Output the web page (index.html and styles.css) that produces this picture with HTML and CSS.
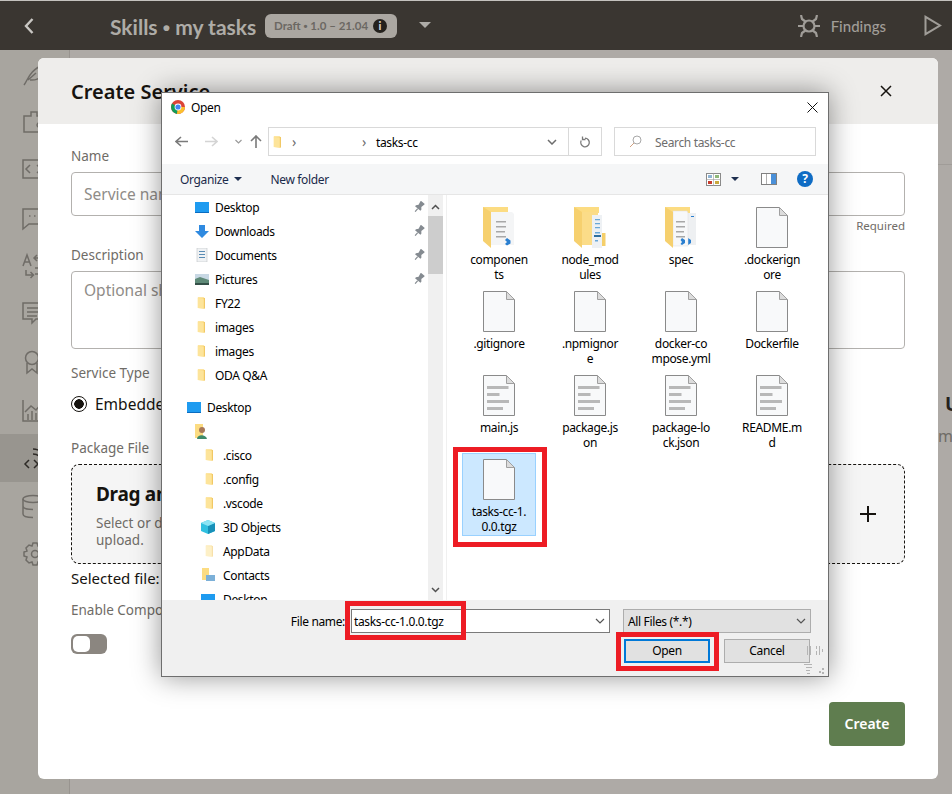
FILE: index.html
```html
<!DOCTYPE html>
<html lang="en">
<head>
  <meta charset="UTF-8">
  <title>Create Service</title>
  <link rel="stylesheet" href="styles.css">
</head>
<body>

  <svg class="defs" width="0" height="0">
    <symbol id="tree-folder" viewBox="0 0 12 16">
      <path d="M1 1h7l1 1v13l-8-1z" fill="#fcdc82"/>
      <path d="M8 2h1.500v12.500H8z" fill="#f0c45c"/>
      <path d="M1 2l7 1v11.500l-7-.5z" fill="#fde49a"/>
    </symbol>
    <symbol id="pin" viewBox="0 0 12 12">
      <g transform="rotate(40 6 6)" fill="#858b91">
        <path d="M3.500 0h5v1l-.7 3.500L9.500 6.500V8h-7V6.500l1.700-2L3.500 1z"/>
        <path d="M5.400 8h1.200v4H5.400z"/>
      </g>
    </symbol>
    <symbol id="blank-doc" viewBox="0 0 32 41">
      <path d="M.5.500h23l8 8v32H.5z" fill="#f8f9fa" stroke="#8a8a8a"/>
      <path d="M23.500.500v8h8z" fill="#dcdcdc" stroke="#a0a0a0"/>
    </symbol>
    <symbol id="text-doc" viewBox="0 0 32 41">
      <path d="M.5.500h23l8 8v32H.5z" fill="#f8f9fa" stroke="#8a8a8a"/>
      <path d="M23.500.500v8h8z" fill="#dcdcdc" stroke="#a0a0a0"/>
      <path d="M4 11h21.500v3H4zM4 18h12.500v3H4zM4 25h22v3H4zM4 32h16v3H4z" fill="#b8b8b8"/>
    </symbol>
    <symbol id="folder-doc" viewBox="0 0 32 41">
      <path d="M0 0h25v6H0z" fill="#fcdc82"/>
      <path d="M8 5h21l2 2v31H8z" fill="#f4f5f6"/>
      <path d="M13 14h10v1.400H13zM13 19h10v1.400H13zM13 24h9v1.400h-9zM13 29h10v1.400H13z" fill="#a8a8a8"/>
      <path d="M24 31l3.500 2.500v3L24 38.500l-2-1.500 2-2-2-2z" fill="#2a7fd0"/>
      <path d="M0 0l8 5v36l-8-7z" fill="#f6d06e"/>
    </symbol>
    <symbol id="folder-node" viewBox="0 0 32 41">
      <path d="M0 0h25v6H0z" fill="#fcdc82"/>
      <path d="M8 5h16v33H8z" fill="#fbdc88"/>
      <path d="M18 8h10v33H18z" fill="#eef1f4"/>
      <path d="M28 26h3.500v13H28z" fill="#f5cf6a"/>
      <path d="M21 12h5v1.200h-5zM21 16h5v1.200h-5zM21 20h5v1.200h-5zM21 25h5v1.400h-5zM21 33h3v1.400h-3z" fill="#6aa8d8"/>
      <path d="M20 28h7v2h-7z" fill="#2f6f9f"/>
      <path d="M0 0l8 5v36l-8-7z" fill="#f6d06e"/>
    </symbol>
    <symbol id="folder-spec" viewBox="0 0 32 41">
      <path d="M0 0h25v6H0z" fill="#fcdc82"/>
      <path d="M20 6h11v32H20z" fill="#eef0f2"/>
      <path d="M23 31l3 2v3l-3 2-1.500-1 1.500-2-1.500-2zM26 9h3v1h-3z" fill="#2a7fd0"/>
      <path d="M8 4h14l1 2v33H8z" fill="#f7f8f9" stroke="#dedede" stroke-width=".5"/>
      <path d="M11 14h9v1.400h-9zM11 19h9v1.400h-9zM11 24h8v1.400h-8zM11 29h9v1.400h-9z" fill="#a8a8a8"/>
      <path d="M17 31l3 2v3l-3 2-1.500-1 1.500-2-1.500-2z" fill="#2a7fd0"/>
      <path d="M0 0l8 5v36l-8-7z" fill="#f6d06e"/>
    </symbol>
  </svg>

  <header class="topbar">
    <svg class="back" width="12" height="18" viewBox="0 0 12 18"><path d="M9.500 2L3 9l6.500 7" fill="none" stroke="#c9c7c3" stroke-width="2.400"/></svg>
    <div class="skill-title">Skills <span class="dot">•</span> my tasks</div>
    <div class="badge"><span>Draft <span class="dot">•</span> 1.0 – 21.04</span> <span class="info">i</span></div>
    <span class="caret"></span>
    <div class="findings">
      <svg width="22" height="22" viewBox="0 0 22 22" fill="none" stroke="#a09d98" stroke-width="2.200">
        <circle cx="11" cy="11" r="5.500"/>
        <path d="M3 0l1 4 4 3M19 0l-1 4-4 3M0 11h5M22 11h-5M3 22l1-4 4-3M19 22l-1-4-4-3"/>
      </svg>
      <span>Findings</span>
    </div>
    <svg class="play" width="18" height="21" viewBox="0 0 18 21"><path d="M1.500 1.800v17.400L16 10.500z" fill="none" stroke="#a09d98" stroke-width="2"/></svg>
  </header>

  <div class="page">
    <nav class="sidebar">
      <div class="side-item"><svg viewBox="0 0 24 24"><path d="M1 23C5 18 6 8 22 2c0 10-5 17-15 16M5 18l8-7"/></svg></div>
      <div class="side-item"><svg viewBox="0 0 24 24"><path d="M1 6h7V2h6v4h8v16H1zM16 13a2 2 0 1 0 .1 0"/></svg></div>
      <div class="side-item"><svg viewBox="0 0 24 24"><path d="M0 2h24v18H0zM7 7l-4 4 4 4M14 7l4 4-4 4"/></svg></div>
      <div class="side-item"><svg viewBox="0 0 24 24"><path d="M0 3h24v15H6l-6 5zM6 10h1.500M11 10h1.500M16 10h1.500"/></svg></div>
      <div class="side-item"><svg viewBox="0 0 24 24"><path d="M0 12L4 1l4 11M1.500 8h5M14 1l-3 3 3 3M11 4h9M3 16v5h7M7.500 18l3 3-3 3M12 14h8M12 20h8"/></svg></div>
      <div class="side-item"><svg viewBox="0 0 24 24"><path d="M0 1h22v16h-9l-4 4v-4H0zM4 6h14M4 10h14M4 14h10"/></svg></div>
      <div class="side-item"><svg viewBox="0 0 24 24"><circle cx="9" cy="8" r="6.500"/><path d="M4 13v10l5-4 5 4V13"/></svg></div>
      <div class="side-item"><svg viewBox="0 0 24 24"><path d="M0 2v21h22M2 14l6-6 5 4 7-8M5 22v-6M9 22v-9M13 22v-7M17 22v-9"/></svg></div>
      <div class="side-item active"><svg viewBox="0 0 24 24"><path d="M6 14l-4 4 4 4M11 14l4 4-4 4M10 8c5 0 8 3 9 8M10 3c7 0 12 5 13 12"/></svg></div>
      <div class="side-item"><svg viewBox="0 0 24 24"><ellipse cx="10" cy="5" rx="10" ry="3.500"/><path d="M0 5v15c0 2 4 3.500 10 3.500M20 5v15M0 12c0 2 4 3.500 10 3.500"/></svg></div>
      <div class="side-item"><svg viewBox="0 0 24 24"><circle cx="12" cy="12" r="3.500"/><path d="M10 1h4l1 3 3-1 3 3-1 3 3 1v4l-3 1 1 3-3 3-3-1-1 3h-4l-1-3-3 1-3-3 1-3-3-1v-4l3-1-1-3 3-3 3 1z"/></svg></div>
    </nav>
    <div class="behind">
      <div class="behind-top"></div>
      <div class="behind-title">U</div>
      <div class="behind-sub">m</div>
    </div>
  </div>

  <section class="modal">
    <div class="modal-head">
      <h2>Create Service</h2>
      <svg width="12" height="12" viewBox="0 0 12 12"><path d="M1 1l10 10M11 1L1 11" stroke="#16130f" stroke-width="1.500"/></svg>
    </div>
    <div class="modal-body">
      <div class="label">Name</div>
      <div class="input"><span class="placeholder">Service name</span></div>
      <div class="required">Required</div>
      <div class="label">Description</div>
      <div class="input textarea"><span class="placeholder">Optional short description</span></div>
      <div class="label type-label">Service Type</div>
      <div class="radio-row"><span class="radio"></span>Embedded Container</div>
      <div class="label package-label">Package File</div>
      <div class="dropzone">
        <div class="drop-text">
          <div class="drop-title">Drag and Drop</div>
          <div class="drop-sub">Select or drop a file here<br>upload.</div>
        </div>
        <span class="plus"></span>
      </div>
      <div class="selected">Selected file:</div>
      <div class="label enable-label">Enable Component Logging</div>
      <div class="toggle"><span></span></div>
      <div class="modal-foot"><button class="create">Create</button></div>
    </div>
  </section>

  <section class="dialog">
    <div class="dlg-title">
      <svg width="14" height="14" viewBox="0 0 14 14">
        <circle cx="7" cy="7" r="7" fill="#db4437"/>
        <path d="M7 7L1 3.600A7 7 0 0 0 6 13.900z" fill="#0f9d58"/>
        <path d="M7 7h7a7 7 0 0 1-8 6.900z" fill="#fbc02d"/>
        <circle cx="7" cy="7" r="3.400" fill="#fff"/>
        <circle cx="7" cy="7" r="2.600" fill="#4285f4"/>
      </svg>
      <span class="dlg-name">Open</span>
      <svg class="dlg-close" width="11" height="11" viewBox="0 0 11 11"><path d="M.5.500l10 10M10.500.500l-10 10" stroke="#111" stroke-width="1"/></svg>
    </div>

    <div class="nav-row">
      <div class="nav-arrows">
        <svg width="13" height="11" viewBox="0 0 13 11"><path d="M6 1L1 5.500 6 10M1 5.500h12" fill="none" stroke="#7a7a7a" stroke-width="1.600"/></svg>
        <svg class="fwd" width="13" height="11" viewBox="0 0 13 11"><path d="M7 1l5 4.500L7 10M12 5.500H0" fill="none" stroke="#d4d4d4" stroke-width="1.600"/></svg>
        <svg class="down" width="7" height="5" viewBox="0 0 7 5"><path d="M.5 1l3 3 3-3" fill="none" stroke="#9a9a9a" stroke-width="1.200"/></svg>
        <svg class="up" width="12" height="13" viewBox="0 0 12 13"><path d="M1 6l5-5 5 5M6 1v12" fill="none" stroke="#7a7a7a" stroke-width="1.600"/></svg>
      </div>
      <div class="address">
        <svg class="addr-folder" width="10" height="14"><use href="#tree-folder"/></svg>
        <span class="crumb">›</span>
        <span class="crumb second">›</span>
        <span class="addr-text">tasks-cc</span>
        <svg class="addr-drop" width="10" height="6" viewBox="0 0 10 6"><path d="M1 1l4 4 4-4" fill="none" stroke="#6d6d6d" stroke-width="1.500"/></svg>
        <div class="refresh">
          <svg width="12" height="12" viewBox="0 0 12 12"><path d="M6 2.200a4.300 4.300 0 1 1-3.800 2.300M3.500.500v3h3" fill="none" stroke="#7a7a7a" stroke-width="1.300"/></svg>
        </div>
      </div>
      <div class="search">
        <svg width="13" height="13" viewBox="0 0 13 13"><circle cx="8" cy="5" r="4" fill="none" stroke="#a8a8a8"/><path d="M5 8l-4 4" stroke="#d0a080" stroke-width="1"/></svg>
        <span>Search tasks-cc</span>
      </div>
    </div>

    <div class="toolbar">
      <span class="tool-btn">Organize<span class="tool-caret"></span></span>
      <span class="tool-btn new-folder">New folder</span>
      <div class="tool-right">
        <svg width="15" height="13" viewBox="0 0 15 13">
          <rect x=".5" y=".5" width="14" height="12" fill="#fff" stroke="#8a8a8a"/>
          <path d="M2 2h4v3H2z" fill="#8fb4d4"/><path d="M9 2h4v3H9z" fill="#8fb87a"/>
          <path d="M2 8h4v3H2z" fill="#c83c2c"/><path d="M9 8h4v3H9z" fill="#c8a83c"/>
          <path d="M0 6.500h15M7.500 0v13" stroke="#9a9a9a" stroke-width=".6"/>
        </svg>
        <span class="tool-caret"></span>
        <svg class="pane-icon" width="16" height="12" viewBox="0 0 16 12">
          <rect x=".5" y=".5" width="15" height="11" fill="#fff" stroke="#808080"/>
          <path d="M10 1h5v10h-5z" fill="#4a90d9"/><path d="M5 1h1v10H5z" fill="#b0b0b0"/>
        </svg>
        <span class="help">?</span>
      </div>
    </div>

    <div class="dlg-main">
      <div class="tree">
        <div class="tree-row lvl-1"><svg width="14" height="11" viewBox="0 0 14 11"><rect width="14" height="11" fill="#1e9bf0"/><path d="M0 10h14v1H0z" fill="#0a6cc0"/></svg>Desktop<svg class="pin" width="12" height="12"><use href="#pin"/></svg></div>
        <div class="tree-row lvl-1"><svg width="14" height="13" viewBox="0 0 14 13"><path d="M4 0h6v6h4l-7 7-7-7h4z" fill="#2f8ae0"/></svg>Downloads<svg class="pin" width="12" height="12"><use href="#pin"/></svg></div>
        <div class="tree-row lvl-1"><svg width="14" height="14" viewBox="0 0 14 14"><path d="M2 0h10v14H2z" fill="#f0f2f4" stroke="#c0c4c8" stroke-width=".6"/><path d="M4 3h6v1H4zM4 6h6v1H4zM4 9h6v1H4z" fill="#5a8cb4"/></svg>Documents<svg class="pin" width="12" height="12"><use href="#pin"/></svg></div>
        <div class="tree-row lvl-1"><svg width="14" height="11" viewBox="0 0 14 11"><rect width="14" height="11" fill="#c8d8e4"/><path d="M0 5l5-2 9 3v5H0z" fill="#5f8a78"/><path d="M0 9h14v2H0z" fill="#345048"/></svg>Pictures<svg class="pin" width="12" height="12"><use href="#pin"/></svg></div>
        <div class="tree-row lvl-1"><svg class="folder" width="10" height="14"><use href="#tree-folder"/></svg>FY22</div>
        <div class="tree-row lvl-1"><svg class="folder" width="10" height="14"><use href="#tree-folder"/></svg>images</div>
        <div class="tree-row lvl-1"><svg class="folder" width="10" height="14"><use href="#tree-folder"/></svg>images</div>
        <div class="tree-row lvl-1"><svg class="folder" width="10" height="14"><use href="#tree-folder"/></svg>ODA Q&amp;A</div>
        <div class="tree-row lvl-0 tree-gap"><svg width="14" height="11" viewBox="0 0 14 11"><rect width="14" height="11" fill="#1e9bf0"/><path d="M0 10h14v1H0z" fill="#0a6cc0"/></svg>Desktop</div>
        <div class="tree-row lvl-user"><svg width="14" height="15" viewBox="0 0 14 15"><path d="M0 0h8v14H0z" fill="#fcdc82"/><circle cx="7" cy="6" r="3" fill="#a87858"/><path d="M2 15c0-5 9-5 10 0z" fill="#3f8a6a"/></svg></div>
        <div class="tree-row lvl-2"><svg class="folder" width="10" height="14"><use href="#tree-folder"/></svg>.cisco</div>
        <div class="tree-row lvl-2"><svg class="folder" width="10" height="14"><use href="#tree-folder"/></svg>.config</div>
        <div class="tree-row lvl-2"><svg class="folder" width="10" height="14"><use href="#tree-folder"/></svg>.vscode</div>
        <div class="tree-row lvl-2 wide-icon"><svg width="14" height="14" viewBox="0 0 14 14"><path d="M7 0l7 3v8l-7 3-7-3V3z" fill="#30c0e0"/><path d="M7 6l7-3v8l-7 3z" fill="#1890b8"/><path d="M7 6L0 3l7-3 7 3z" fill="#8ce4f4"/></svg>3D Objects</div>
        <div class="tree-row lvl-2"><svg class="folder faded" width="10" height="14"><use href="#tree-folder"/></svg>AppData</div>
        <div class="tree-row lvl-2 wide-icon"><svg width="14" height="14" viewBox="0 0 14 14"><path d="M1 0h7v12H1z" fill="#fcdc82"/><rect x="5" y="7" width="9" height="6" fill="#7cb0d8"/></svg>Contacts</div>
        <div class="tree-row lvl-2 wide-icon"><svg width="14" height="11" viewBox="0 0 14 11"><rect width="14" height="11" fill="#1e9bf0"/></svg>Desktop</div>
      </div>
      <div class="scrollbar">
        <svg width="9" height="6" viewBox="0 0 9 6"><path d="M1 5l3.500-3.500L8 5" fill="none" stroke="#505050" stroke-width="1.500"/></svg>
        <div class="thumb"></div>
        <svg class="scroll-down" width="9" height="6" viewBox="0 0 9 6"><path d="M1 1l3.500 3.500L8 1" fill="none" stroke="#505050" stroke-width="1.500"/></svg>
      </div>
      <div class="files">
        <div class="file"><svg width="32" height="41"><use href="#folder-doc"/></svg><div>componen<br>ts</div></div>
        <div class="file"><svg width="32" height="41"><use href="#folder-node"/></svg><div>node_mod<br>ules</div></div>
        <div class="file"><svg width="32" height="41"><use href="#folder-spec"/></svg><div>spec</div></div>
        <div class="file"><svg width="32" height="41"><use href="#blank-doc"/></svg><div>.dockerign<br>ore</div></div>
        <div class="file"><svg width="32" height="41"><use href="#blank-doc"/></svg><div>.gitignore</div></div>
        <div class="file"><svg width="32" height="41"><use href="#blank-doc"/></svg><div>.npmignor<br>e</div></div>
        <div class="file"><svg width="32" height="41"><use href="#blank-doc"/></svg><div>docker-co<br>mpose.yml</div></div>
        <div class="file"><svg width="32" height="41"><use href="#blank-doc"/></svg><div>Dockerfile</div></div>
        <div class="file"><svg width="32" height="41"><use href="#text-doc"/></svg><div>main.js</div></div>
        <div class="file"><svg width="32" height="41"><use href="#text-doc"/></svg><div>package.js<br>on</div></div>
        <div class="file"><svg width="32" height="41"><use href="#text-doc"/></svg><div>package-lo<br>ck.json</div></div>
        <div class="file"><svg width="32" height="41"><use href="#text-doc"/></svg><div>README.m<br>d</div></div>
        <div class="file selected-file"><svg width="32" height="41"><use href="#blank-doc"/></svg><div>tasks-cc-1.<br>0.0.tgz</div></div>
      </div>
    </div>

    <div class="dlg-foot">
      <div class="foot-row">
        <span class="file-label">File name:</span>
        <div class="name-input">tasks-cc-1.0.0.tgz
          <svg width="10" height="6" viewBox="0 0 10 6"><path d="M1 1l4 4 4-4" fill="none" stroke="#555" stroke-width="1.200"/></svg>
        </div>
        <div class="filter">All Files (*.*)
          <svg width="10" height="6" viewBox="0 0 10 6"><path d="M1 1l4 4 4-4" fill="none" stroke="#555" stroke-width="1.200"/></svg>
        </div>
      </div>
      <div class="foot-row buttons">
        <button class="win-btn primary">Open</button>
        <button class="win-btn">Cancel</button>
      </div>
      <svg class="grip" width="24" height="30" viewBox="0 0 24 30" fill="#b4b4b4">
        <path d="M3 0h1v9H3zM6 0h1v9H6zM12 0h1v3h-1zM12 5h1v4h-1zM15 0h1v9h-1zM18 3h1v3h-1z"/>
        <path d="M0 18h8v1H0zM2 21h6v1H2zM2 24h4v1H2zM3 27h3v1H3zM15 25h2v2h-2zM18 22h2v2h-2zM18 26h2v2h-2z"/>
      </svg>
    </div>
  </section>

  <div class="callout callout-file"></div>
  <div class="callout callout-name"></div>
  <div class="callout callout-open"></div>

</body>
</html>
```
FILE: styles.css
```css
* {
  box-sizing: border-box;
}

html, body {
  height: 100%;
}

body {
  margin: 0;
  width: 952px;
  height: 794px;
  overflow: hidden;
  position: relative;
  background-color: #aeaaa6;
  font-family: "Noto Sans", sans-serif;
  border-top: 1px solid #c4c2be;
}

.defs {
  position: absolute;
}

/* top bar */
.topbar {
  height: 49px;
  background-color: #3a3631;
  display: flex;
  align-items: center;
  padding-left: 23px;
  font-family: Lato, sans-serif;
}

.back {
  margin-right: 75px;
}

.skill-title {
  width: 155px;
  font-size: 21px;
  font-weight: 700;
  color: #aeaca7;
  margin-top: 3px;
  white-space: nowrap;
}

.dot {
  font-family: "Liberation Sans", sans-serif;
}

.badge {
  width: 132px;
  height: 24px;
  background-color: #aba7a1;
  color: #6b6863;
  border-radius: 6px;
  font-size: 11.500px;
  font-weight: 700;
  white-space: nowrap;
  display: flex;
  align-items: center;
  justify-content: space-between;
  padding: 0 10px 0 9px;
}

.info {
  width: 14px;
  height: 14px;
  border-radius: 50%;
  background-color: #24211d;
  color: #d8d6d2;
  font-size: 11px;
  line-height: 14px;
  text-align: center;
  font-weight: 900;
}

.caret {
  width: 0;
  height: 0;
  margin-left: 22px;
  border-left: 6px solid transparent;
  border-right: 6px solid transparent;
  border-top: 6px solid #aeaca7;
  margin-top: -2px;
}

.findings {
  margin-left: auto;
  display: flex;
  align-items: center;
  gap: 11px;
  color: #a09d98;
  font-size: 15px;
  font-weight: 500;
}

.play {
  margin-left: 38px;
  margin-right: 10px;
}

/* dimmed page behind the modal */
.page {
  display: flex;
  height: 744px;
}

.sidebar {
  width: 70px;
  flex-shrink: 0;
  background-color: #a8a59f;
  border-right: 1px solid #98948f;
}

.side-item {
  height: 48px;
  display: flex;
  align-items: center;
  padding-left: 23px;
}

.side-item svg {
  width: 24px;
  height: 24px;
  fill: none;
  stroke: #6f6c67;
  stroke-width: 1.500;
  overflow: visible;
}

.side-item.active {
  background-color: #98958f;
}

.side-item.active svg {
  stroke: #2e2b27;
}

.behind {
  flex: 1;
  min-width: 0;
  padding-left: 875px;
  white-space: nowrap;
}

.behind-top {
  height: 115px;
  margin-left: -875px;
  border-bottom: 1px solid #a09c98;
}

.behind-title {
  font-size: 19px;
  font-weight: 700;
  color: #24211d;
  margin-top: 227px;
  line-height: 24px;
}

.behind-sub {
  font-size: 16px;
  color: #6f6c67;
  margin-left: -7px;
  margin-top: 8px;
  line-height: 24px;
}

/* modal */
.modal {
  position: absolute;
  left: 38px;
  top: 57px;
  width: 900px;
  height: 721px;
  background-color: #fff;
  border-radius: 6px;
  display: flex;
  flex-direction: column;
  overflow: hidden;
}

.modal-head {
  height: 66px;
  flex-shrink: 0;
  background-color: #eeedeb;
  display: flex;
  align-items: center;
  justify-content: space-between;
  padding: 0 46px 0 33px;
}

.modal-head h2 {
  margin: 0;
  font-size: 20px;
  font-weight: 600;
  color: #16130f;
}

.modal-body {
  flex: 1;
  display: flex;
  flex-direction: column;
  padding: 22px 33px 33px;
}

.label {
  font-size: 13.500px;
  line-height: 20px;
  color: #6f6c67;
  margin-bottom: 6px;
}

.input {
  height: 44px;
  flex-shrink: 0;
  border: 1px solid #b3b1ae;
  border-radius: 4px;
  padding: 0 12px;
  display: flex;
  align-items: center;
}

.textarea {
  height: 78px;
  align-items: flex-start;
  padding-top: 7px;
}

.placeholder {
  font-size: 15.500px;
  color: #8f8c88;
}

.required {
  font-size: 11.500px;
  line-height: 20px;
  color: #6f6c67;
  text-align: right;
  margin-bottom: 9px;
}

.type-label {
  margin-top: 14px;
  margin-bottom: 11px;
}

.radio-row {
  display: flex;
  align-items: center;
  gap: 8px;
  height: 20px;
  font-size: 15.500px;
  color: #16130f;
}

.radio {
  width: 16px;
  height: 16px;
  border-radius: 50%;
  border: 1.500px solid #16130f;
  background: radial-gradient(circle, #16130f 0 4.500px, #fff 5px);
}

.package-label {
  margin-top: 24px;
}

.dropzone {
  height: 100px;
  flex-shrink: 0;
  border: 1px dashed #16130f;
  border-radius: 8px;
  background-color: #f5f5f5;
  display: flex;
  align-items: center;
  justify-content: space-between;
  padding: 0 28px 0 24px;
}

.drop-text {
  padding-top: 1px;
}

.drop-title {
  font-size: 19px;
  font-weight: 700;
  letter-spacing: -0.3px;
  color: #16130f;
  margin-bottom: 8px;
}

.drop-sub {
  font-size: 13.500px;
  line-height: 17px;
  color: #6f6c67;
}

.plus {
  width: 16px;
  height: 16px;
  background:
    linear-gradient(#16130f, #16130f) center / 16px 2px no-repeat,
    linear-gradient(#16130f, #16130f) center / 2px 16px no-repeat;
}

.selected {
  font-size: 15px;
  line-height: 20px;
  margin-top: 4px;
  color: #16130f;
}

.enable-label {
  margin-top: 12px;
  margin-bottom: 14px;
}

.toggle {
  width: 36px;
  height: 20px;
  border-radius: 6px;
  background-color: #8b8680;
  padding: 2px;
}

.toggle span {
  display: block;
  width: 17px;
  height: 16px;
  border-radius: 5px;
  background-color: #fff;
}

.modal-foot {
  margin-top: auto;
  display: flex;
  justify-content: flex-end;
}

.create {
  width: 76px;
  height: 44px;
  border: none;
  border-radius: 4px;
  background-color: #5f7d4f;
  color: #fff;
  font-family: "Noto Sans", sans-serif;
  font-size: 14px;
  font-weight: 600;
  padding: 0 0 2px;
}

/* windows file dialog */
.dialog {
  position: absolute;
  left: 161px;
  top: 91px;
  width: 668px;
  height: 585px;
  background-color: #fff;
  border: 1px solid #6e6e6e;
  box-shadow: 0 0 26px rgba(0, 0, 0, 0.42);
  display: flex;
  flex-direction: column;
  font-size: 12px;
  letter-spacing: -0.35px;
  color: #000;
}

.dlg-title {
  height: 34px;
  flex-shrink: 0;
  display: flex;
  align-items: center;
  padding: 0 0 6px 9px;
  gap: 6px;
}

.dlg-close {
  margin-left: auto;
  margin-right: 10px;
}

.nav-row {
  height: 29px;
  flex-shrink: 0;
  display: flex;
  align-items: stretch;
}

.nav-arrows {
  width: 106px;
  display: flex;
  align-items: center;
  padding-left: 13px;
}

.fwd {
  margin-left: 17px;
}

.down {
  margin-left: 17px;
}

.up {
  margin-left: 8px;
}

.address {
  width: 334px;
  border: 1px solid #d9d9d9;
  display: flex;
  align-items: center;
  padding-left: 4px;
}

.crumb {
  color: #6d6d6d;
  margin-left: 9px;
  font-size: 14px;
}

.crumb.second {
  margin-left: 66px;
}

.addr-text {
  margin-left: 10px;
  padding-top: 1px;
}

.addr-drop {
  margin-left: auto;
  margin-right: 11px;
}

.refresh {
  width: 33px;
  height: 100%;
  border-left: 1px solid #d9d9d9;
  display: flex;
  align-items: center;
  justify-content: center;
}

.search {
  width: 202px;
  margin-left: 12px;
  border: 1px solid #d9d9d9;
  display: flex;
  align-items: center;
  padding-left: 14px;
  gap: 13px;
  color: #6d6d6d;
}

.search span {
  padding-top: 1px;
}

.toolbar {
  height: 31px;
  flex-shrink: 0;
  margin-top: 8px;
  background-color: #f5f6f7;
  border-bottom: 1px solid #e6e6e6;
  display: flex;
  align-items: center;
  padding-left: 18px;
  color: #1a2a4a;
}

.tool-btn {
  display: flex;
  align-items: center;
}

.tool-caret {
  width: 0;
  height: 0;
  border-left: 4px solid transparent;
  border-right: 4px solid transparent;
  border-top: 4px solid #1e2f50;
  margin-left: 6px;
}

.new-folder {
  margin-left: 28px;
}

.tool-right {
  margin-left: auto;
  margin-right: 15px;
  display: flex;
  align-items: center;
}

.tool-right .tool-caret {
  margin-left: 10px;
}

.pane-icon {
  margin-left: 22px;
}

.help {
  width: 16px;
  height: 16px;
  margin-left: 20px;
  border-radius: 50%;
  background-color: #0f6cc4;
  color: #fff;
  font-size: 12px;
  font-weight: 700;
  line-height: 16px;
  text-align: center;
}

.dlg-main {
  height: 405px;
  flex-shrink: 0;
  display: flex;
}

.tree {
  width: 266px;
  overflow: hidden;
}

.tree-row {
  height: 24px;
  flex-shrink: 0;
  display: flex;
  align-items: center;
  position: relative;
}

.tree-row svg {
  margin-right: 6px;
  flex-shrink: 0;
}

.tree-row .folder {
  margin-left: 2px;
  margin-right: 8px;
}

.tree-row .pin {
  position: absolute;
  right: 3px;
  top: 6px;
  margin: 0;
}

.faded {
  opacity: 0.55;
}

.lvl-0 {
  padding-left: 25px;
}

.lvl-1 {
  padding-left: 33px;
}

.lvl-user {
  padding-left: 33px;
}

.lvl-2 {
  padding-left: 41px;
}

.wide-icon {
  padding-left: 39px;
}

.wide-icon svg {
  margin-right: 8px;
}

.tree-gap {
  margin-top: 8px;
}

.scrollbar {
  width: 15px;
  background-color: #f0f0f0;
  position: relative;
  display: flex;
  flex-direction: column;
  align-items: center;
  padding-top: 9px;
}

.thumb {
  position: absolute;
  left: 0;
  top: 21px;
  width: 15px;
  height: 58px;
  background-color: #cdcdcd;
}

.scroll-down {
  margin-top: auto;
  margin-bottom: 7px;
}

.files {
  flex: 1;
  margin-left: 3px;
  border-left: 1px solid #f0f0f0;
  padding: 6px 0 0 15px;
  display: grid;
  grid-template-columns: repeat(4, 74px);
  grid-auto-rows: 84px;
  column-gap: 17px;
  align-content: start;
}

.file {
  height: 83px;
  text-align: center;
  padding-top: 5px;
  line-height: 15px;
  white-space: nowrap;
  border: 1px solid transparent;
}

.file svg {
  display: block;
  margin: 0 auto 4px;
}

.selected-file {
  background-color: #cce8ff;
  border-color: #99d1ff;
}

.dlg-foot {
  flex: 1;
  background-color: #f0f0f0;
  position: relative;
  padding: 9px 17px 0 0;
}

.foot-row {
  display: flex;
  justify-content: flex-end;
  align-items: center;
}

.file-label {
  margin-right: 6px;
}

.name-input {
  width: 259px;
  height: 24px;
  background-color: #fff;
  border: 1px solid #7a7a7a;
  display: flex;
  align-items: center;
  justify-content: space-between;
  padding: 0 4px 0 2px;
}

.filter {
  width: 188px;
  height: 24px;
  margin-left: 13px;
  background-color: #e1e1e1;
  border: 1px solid #adadad;
  display: flex;
  align-items: center;
  justify-content: space-between;
  padding: 0 4px;
}

.buttons {
  margin-top: 6px;
  gap: 14px;
  padding-right: 1px;
}

.win-btn {
  width: 86px;
  height: 24px;
  background-color: #e1e1e1;
  border: 1px solid #adadad;
  font-family: "Noto Sans", sans-serif;
  font-size: 12px;
  letter-spacing: -0.35px;
  padding: 0 0 1px;
}

.win-btn.primary {
  border: 2px solid #0078d7;
}

.grip {
  position: absolute;
  right: 0;
  bottom: 0;
}

/* red annotation boxes over the screenshot */
.callout {
  position: absolute;
  border: 5px solid #ed1c24;
}

.callout-file {
  left: 453px;
  top: 446px;
  width: 94px;
  height: 100px;
}

.callout-name {
  left: 345px;
  top: 600px;
  width: 121px;
  height: 39px;
}

.callout-open {
  left: 616px;
  top: 631px;
  width: 103px;
  height: 39px;
}
```
